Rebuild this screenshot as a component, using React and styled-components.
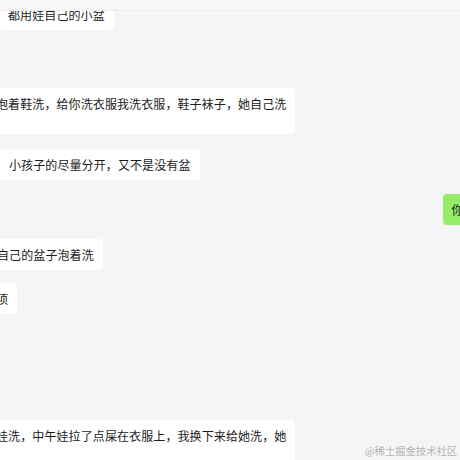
import React from 'react';
import styled, {createGlobalStyle} from 'styled-components';

const GlobalStyle = createGlobalStyle`
  html, body {
    margin: 0;
    padding: 0;
    background: #f5f5f5;
    overflow: hidden;
  }
  body {
    font-family: "Noto Sans CJK SC", "Noto Sans", sans-serif;
  }
`;

const Page = styled.div`
  position: relative;
  width: 460px;
  height: 460px;
  overflow: hidden;
  background: #f5f5f5;
`;

const TopBar = styled.div`
  position: absolute;
  top: 0;
  left: 0;
  right: 0;
  height: 10px;
  background: #f7f7f7;
  border-bottom: 1px solid #ececec;
  z-index: 2;
`;

const Chat = styled.div`
  display: flex;
  flex-direction: column;
`;

const Row = styled.div`
  display: flex;
  justify-content: ${props => (props.$mine ? 'flex-end' : 'flex-start')};
  margin-top: ${props => props.$top}px;
`;

const Bubble = styled.div`
  flex-shrink: 0;
  white-space: nowrap;
  padding: 8px 9px 8px 9px;
  border-radius: 4px;
  font-size: 12px;
  line-height: 15px;
  letter-spacing: 0.1px;
  color: #1a1a1a;
  background: ${props => (props.$mine ? '#95ec69' : '#ffffff')};
  margin-left: ${props => (props.$mine ? 0 : props.$shift)}px;
  margin-right: ${props => (props.$mine ? props.$shift : 0)}px;
`;

const Watermark = styled.div`
  position: absolute;
  right: 3px;
  bottom: 2px;
  font-size: 10.5px;
  line-height: 14px;
  color: #b5b5b5;
  letter-spacing: -0.2px;
`;

const messages = [
  {top: -1, shift: -1, lines: ['都用娃自己的小盆']},
  {top: 58, shift: -13, lines: ['泡着鞋洗，给你洗衣服我洗衣服，鞋子袜子，她自己洗', '\u00a0']},
  {top: 15, shift: 0, lines: ['小孩子的尽量分开，又不是没有盆']},
  {top: 14, shift: -49, mine: true, lines: ['你说的对']},
  {top: 14, shift: -12, lines: ['自己的盆子泡着洗']},
  {top: 13, shift: -13, lines: ['项']},
  {top: 106, shift: -13, lines: ['娃洗，中午娃拉了点屎在衣服上，我换下来给她洗，她', '\u00a0']},
];

const App = () => (
  <Page>
    <GlobalStyle />
    <TopBar />
    <Chat>
      {messages.map((m, i) => (
        <Row key={i} $top={m.top} $mine={m.mine}>
          <Bubble $mine={m.mine} $shift={m.shift}>
            {m.lines.map((line, j) => (
              <React.Fragment key={j}>
                {j > 0 && <br />}
                {line}
              </React.Fragment>
            ))}
          </Bubble>
        </Row>
      ))}
    </Chat>
    <Watermark>@稀土掘金技术社区</Watermark>
  </Page>
);

export default App;
